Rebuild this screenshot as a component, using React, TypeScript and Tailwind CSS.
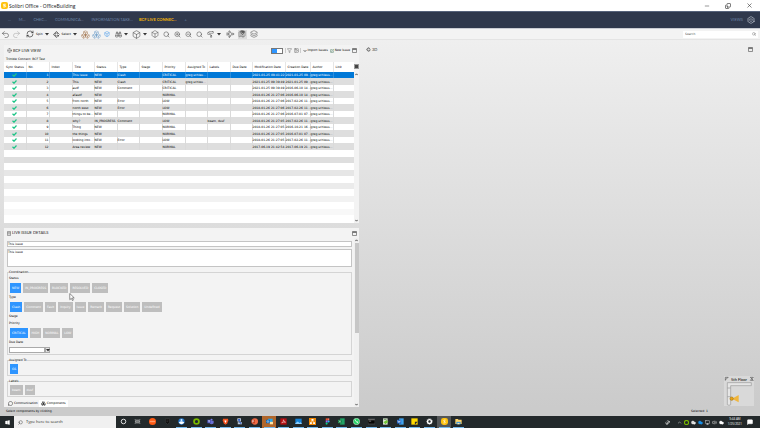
import type { ReactNode } from "react";
import {
  Binoculars,
  Box,
  Boxes,
  ChevronDown,
  ChevronUp,
  Circle,
  Cloud,
  Copy,
  Funnel,
  Glasses,
  Globe,
  Hexagon,
  Image,
  Layers,
  Map,
  MapPin,
  MessageCircle,
  MessageSquare,
  Minus,
  Monitor,
  PaintRoller,
  Plane,
  Redo2,
  RefreshCw,
  Rotate3d,
  Search,
  SquarePen,
  Undo2,
  Volume2,
  X,
  ZoomIn,
  ZoomOut,
} from "lucide-react";
import { FaWindows } from "react-icons/fa";

interface Issue {
  no: number;
  title: string;
  status: string;
  type?: string;
  priority: string;
  assigned?: string;
  labels?: string;
  modified: string;
  created: string;
}

const author = "greg.schleus...";

const issues: Issue[] = [
  { no: 1, title: "This issue", status: "NEW", type: "Clash", priority: "CRITICAL", assigned: "greg.schleu...", modified: "2021-01-25 09:41:22", created: "2021-01-25 09..." },
  { no: 2, title: "This", status: "NEW", type: "Clash", priority: "CRITICAL", assigned: "greg.schleu...", modified: "2021-01-25 09:39:49", created: "2021-01-25 09..." },
  { no: 3, title: "asdf", status: "NEW", type: "Comment", priority: "CRITICAL", modified: "2021-01-25 09:39:49", created: "2016-06-10 14..." },
  { no: 4, title: "afasdf", status: "NEW", priority: "NORMAL", modified: "2018-01-26 21:27:06", created: "2016-06-10 14..." },
  { no: 5, title: "from north", status: "NEW", type: "Error", priority: "LOW", modified: "2018-01-26 21:27:06", created: "2017-02-26 11..." },
  { no: 6, title: "north west", status: "NEW", type: "Error", priority: "LOW", modified: "2018-01-26 21:27:06", created: "2017-02-26 11..." },
  { no: 7, title: "things to be...", status: "NEW", priority: "NORMAL", modified: "2018-01-26 21:27:06", created: "2016-07-01 07..." },
  { no: 8, title: "why?", status: "IN_PROGRESS", type: "Comment", priority: "LOW", labels: "beam, dusf", modified: "2018-01-26 21:27:05", created: "2017-02-26 11..." },
  { no: 9, title: "Thing", status: "NEW", priority: "NORMAL", modified: "2018-01-26 21:27:05", created: "2016-10-21 16..." },
  { no: 10, title: "the things", status: "NEW", priority: "NORMAL", modified: "2018-01-26 21:27:05", created: "2016-07-01 07..." },
  { no: 11, title: "looking into...", status: "NEW", type: "Error", priority: "LOW", modified: "2018-01-26 21:27:05", created: "2017-02-26 11..." },
  { no: 12, title: "Area review", status: "NEW", priority: "NORMAL", modified: "2017-06-19 21:42:54", created: "2017-06-19 21..." },
];

const columns = [
  { name: "Sync Status", width: "w-[22px]" },
  { name: "No.", width: "w-[23px]" },
  { name: "Index", width: "w-[23px]" },
  { name: "Title", width: "w-[22px]" },
  { name: "Status", width: "w-[23px]" },
  { name: "Type", width: "w-[22px]" },
  { name: "Stage", width: "w-[23px]" },
  { name: "Priority", width: "w-[23px]" },
  { name: "Assigned To", width: "w-[22px]" },
  { name: "Labels", width: "w-[23px]" },
  { name: "Due Date", width: "w-[22px]" },
  { name: "Modification Date", width: "w-[33px]" },
  { name: "Creation Date", width: "w-[25px]" },
  { name: "Author", width: "w-[23px]" },
  { name: "Link", width: "w-[21px]" },
];

const fillerRows = [
  "bg-white",
  "bg-[#dedede]",
  "bg-white",
  "bg-[#e6e6e6]",
  "bg-white",
  "bg-[#ebebeb]",
  "bg-white",
  "bg-[#f2f2f2]",
  "bg-white",
  "bg-[#f8f8f8]",
];

function Caret() {
  return (
    <svg viewBox="0 0 8 6" className="h-[3px] w-[4px] shrink-0 fill-[#333]">
      <path d="M0 0h8L4 5z" />
    </svg>
  );
}

function ScrollArrow({ up }: { up?: boolean }) {
  return (
    <svg viewBox="0 0 9 9" className={`size-[3px] shrink-0 ${up ? "rotate-180" : ""}`} fill="none" stroke="#555" strokeWidth="3">
      <path d="M1 2.5l3.500 4L8 2.500" />
    </svg>
  );
}

function WindowIcon() {
  return (
    <svg viewBox="0 0 10 10" className="size-[5px] shrink-0" fill="none" stroke="#666" strokeWidth="1.4">
      <path d="M1 1h8v8H1z" />
      <path d="M1 2.5h8" strokeWidth="2.4" />
    </svg>
  );
}

function SyncCheck() {
  return (
    <svg viewBox="0 0 10 8" className="mx-auto h-[4px] w-[5px]" fill="none" stroke="#1fc487" strokeWidth="2.4">
      <path d="M1 3.5l3 3L9 1" />
    </svg>
  );
}

function Tool({ label, active, children }: { label: string; active?: boolean; children: ReactNode }) {
  return (
    <button
      type="button"
      aria-label={label}
      className={`flex h-[9px] w-[9px] shrink-0 items-center justify-center ${active ? "bg-[#dcdcdc]" : ""}`}
    >
      {children}
    </button>
  );
}

function TitleBar() {
  return (
    <header className="flex h-[11px] items-center bg-white pr-[7px] pl-[1px]">
      <svg viewBox="0 0 14 14" className="size-[7px]">
        <rect width="14" height="14" rx="4" fill="#ffc20e" />
        <path d="M9.5 4.5H6a1.3 1.3 0 0 0 0 2.6h2a1.3 1.3 0 0 1 0 2.7H4.5" fill="none" stroke="#fff" strokeWidth="1.8" />
      </svg>
      <h1 className="ml-[1px] font-['Open_Sans'] text-[5px] leading-[8px] text-[#111]">Solibri Office - OfficeBuilding</h1>
      <div className="ml-auto flex items-center gap-[15px] text-[#333]">
        <button type="button" aria-label="Minimize"><Minus size={6} strokeWidth={2} /></button>
        <button type="button" aria-label="Restore"><Copy size={6} strokeWidth={2.5} className="-scale-x-100 rotate-180" /></button>
        <button type="button" aria-label="Close"><X size={7} strokeWidth={2} /></button>
      </div>
    </header>
  );
}

function NavBar() {
  return (
    <nav className="flex h-[17px] items-center border-t border-[#56627a] bg-[#2f384c] pr-[5px] pl-[8px] font-[Lato] text-[4px] leading-[6px] text-[#6c84a6]">
      <div className="flex gap-[8px]">
        <a href="#more">...</a>
        <a href="#model">M...</a>
        <a href="#checking">CHEC...</a>
        <a href="#communication">COMMUNICA...</a>
        <a href="#takeoff">INFORMATION TAKE...</a>
        <a href="#bcf" className="-ml-[2px] font-bold text-[#f2b705]">BCF LIVE CONNEC...</a>
        <a href="#add">+</a>
      </div>
      <a href="#views" className="ml-auto">VIEWS</a>
      <div className="relative ml-[4px] text-[#c4cad4]">
        <Hexagon size={8} />
        <Box size={4} className="absolute top-[2px] left-[2px]" />
      </div>
    </nav>
  );
}

function Toolbar() {
  return (
    <div className="flex h-[12px] items-center border-y border-t-[#c9ccd2] border-b-[#e4e4e4] bg-[#f3f3f3] pr-[2px] pl-[1px] text-[#4a4a4a]">
      <Tool label="Undo"><Undo2 size={9} strokeWidth={1.5} /></Tool>
      <div className="ml-[2px] text-[#aaa]"><Tool label="Redo"><Redo2 size={9} strokeWidth={1.5} /></Tool></div>
      <button type="button" className="ml-[5px] flex items-center gap-[2px] text-[3px] text-black">
        <RefreshCw size={8} strokeWidth={1.6} />
        Spin
        <Caret />
      </button>
      <button type="button" className="ml-[4px] flex items-center gap-[2px] text-[3px] text-black">
        <Rotate3d size={7} strokeWidth={1.6} />
        Select
        <Caret />
      </button>
      <div className="ml-[4px] flex gap-[2px]">
        <Tool label="Add to selection"><Boxes size={9} strokeWidth={1.2} className="text-[#a1714a]" /></Tool>
        <Tool label="Selection basket"><Boxes size={9} strokeWidth={1.2} className="text-[#6c9cc9]" /></Tool>
        <Tool label="Set selection"><Box size={6} strokeWidth={2} className="text-[#4a9bea]" /></Tool>
        <Tool label="Show"><Binoculars size={7} strokeWidth={1.8} /></Tool>
      </div>
      <div className="ml-[1px]"><Caret /></div>
      <div className="ml-[4px]"><Tool label="View cube"><Box size={9} strokeWidth={1.5} /></Tool></div>
      <div className="ml-[2px]"><Caret /></div>
      <div className="ml-[4px] flex gap-[2px]">
        <Tool label="Section box"><Box size={8} strokeWidth={1.5} /></Tool>
        <Tool label="Zoom area"><Search size={7} strokeWidth={1.8} /></Tool>
        <Tool label="Zoom in"><ZoomIn size={7} strokeWidth={1.8} /></Tool>
        <Tool label="Zoom out"><ZoomOut size={7} strokeWidth={1.8} /></Tool>
        <Tool label="Zoom to fit"><Search size={7} strokeWidth={1.8} /></Tool>
        <Tool label="Markup"><PaintRoller size={7} strokeWidth={1.6} className="-scale-x-100" /></Tool>
      </div>
      <div className="ml-[2px]"><Caret /></div>
      <div className="ml-[5px] flex gap-[3px]">
        <Tool label="Footprint"><Plane size={8} strokeWidth={1.8} className="rotate-45" /></Tool>
        <Tool label="Map" active>
          <span className="relative">
            <Map size={8} strokeWidth={1.4} />
            <MapPin size={5} strokeWidth={2.5} className="absolute top-0 left-[2px] text-[#222]" />
          </span>
        </Tool>
        <Tool label="Layers"><Layers size={8} strokeWidth={1.8} className="text-[#666]" /></Tool>
      </div>
      <label className="ml-auto flex h-[7px] w-[75px] items-center bg-white px-[2px]">
        <input
          type="search"
          placeholder="Search"
          aria-label="Search"
          className="min-w-0 flex-1 text-[3px] leading-[6px] outline-none placeholder:text-[#555]"
        />
        <Search size={4} strokeWidth={2} />
      </label>
    </div>
  );
}

function IssueTable() {
  return (
    <div className="flex flex-1">
      <div className="min-w-0 flex-1 bg-white">
        <table className="w-full table-fixed border-collapse text-[3px] leading-[6px] whitespace-nowrap text-black">
          <thead>
            <tr className="h-[10px]">
              {columns.map((c) => (
                <th key={c.name} className={`${c.width} border-r border-[#e6e6e6] p-0 pl-[2px] text-left font-normal`}>
                  {c.name}
                </th>
              ))}
            </tr>
          </thead>
          <tbody>
            {issues.map((i, n) => {
              const cells = [
                <SyncCheck />, i.no, "", i.title, i.status, i.type, "", i.priority,
                i.assigned, i.labels, "", i.modified, i.created, author, "",
              ];
              return (
                <tr
                  key={i.no}
                  className={`h-[6px] even:h-[7px] ${n === 0 ? "bg-[#0078d7] text-white" : n % 2 ? "bg-[#dedede]" : "bg-white"}`}
                >
                  {cells.map((cell, k) => (
                    <td
                      key={k}
                      className={`border-r p-0 ${n === 0 ? "border-[#2b8ddd]" : "border-[#dadada]"} ${k === 1 ? "text-right" : ""}`}
                    >
                      {cell}
                    </td>
                  ))}
                </tr>
              );
            })}
          </tbody>
        </table>
        {fillerRows.map((bg, n) => (
          <div key={n} className={`h-[6px] even:h-[7px] ${bg}`} />
        ))}
      </div>
      <div className="flex w-[5px] flex-col items-center justify-between bg-[#f3f3f3] pb-[1px]">
        <div className="flex flex-col items-center gap-[4px] pt-[2px]">
          <div className="size-[5px] border border-[#999] bg-[#444]" />
          <ScrollArrow up />
        </div>
        <ScrollArrow />
      </div>
    </div>
  );
}

function IssueListPanel() {
  return (
    <section className="flex h-[178px] flex-col bg-[#f3f3f3]">
      <div className="flex h-[11px] items-center pr-[2px] pl-[3px]">
        <Globe size={5} strokeWidth={1.6} className="text-[#555]" />
        <h2 className="ml-[1px] font-[Lato] text-[4px] leading-[6px] text-[#222]">BCF LIVE VIEW</h2>
        <input
          type="checkbox"
          defaultChecked
          aria-label="Live connection"
          className="relative ml-auto h-[6px] w-[12px] appearance-none border border-[#777] bg-[#2e95ff] after:absolute after:top-0 after:right-0 after:h-[4px] after:w-[5px] after:bg-white"
        />
        <div className="ml-[2px] flex items-center gap-[2px] border-x border-[#ccc] px-[1px] text-[#555]">
          <Funnel size={5} strokeWidth={2} />
          <Image size={5} strokeWidth={2} />
        </div>
        <button type="button" className="ml-[2px] flex items-center gap-[1px] text-[3px] text-black">
          <ChevronDown size={4} strokeWidth={4} />
          Import Issues
        </button>
        <button type="button" className="ml-[2px] flex items-center gap-[1px] text-[3px] text-black">
          <SquarePen size={4} strokeWidth={2.5} className="text-[#3f7557]" />
          New Issue
        </button>
        <div className="ml-[2px]"><WindowIcon /></div>
      </div>
      <p className="h-[6px] pl-[2px] text-[3px] leading-[6px] text-black">Trimble Connect: BCF Test</p>
      <IssueTable />
    </section>
  );
}

function Chips({ label, items, selected }: { label?: string; items: string[]; selected?: string }) {
  return (
    <div>
      {label && <div className="mb-[2px] h-[5px] leading-[5px]">{label}</div>}
      <div className="flex gap-[2px] pl-[1px]">
        {items.map((item) => (
          <button
            key={item}
            type="button"
            aria-pressed={item === selected}
            className={`h-[10px] px-[2px] text-white ${item === selected ? "bg-[#2e95ff]" : "bg-[#bebebe]"}`}
          >
            {item}
          </button>
        ))}
      </div>
    </div>
  );
}

function Group({ title, children }: { title: string; children: ReactNode }) {
  return (
    <fieldset className="mt-[3px] border border-[#d4d4d4] px-[1px] pt-[2px] pb-[1px]">
      <legend className="h-[4px] leading-[4px]">{title}</legend>
      <div className="flex flex-col gap-[2px]">{children}</div>
    </fieldset>
  );
}

function DetailsPanel() {
  return (
    <section className="flex flex-col bg-[#f3f3f3] text-[3px] text-black">
      <div className="flex h-[10px] items-center gap-[1px] pr-[2px] pl-[3px]">
        <svg viewBox="0 0 10 12" className="h-[5px] w-[4px]" fill="none" stroke="#666" strokeWidth="1.4">
          <path d="M1 1h8v10H1zM1 4h8M1 7h8" />
        </svg>
        <h2 className="font-[Lato] text-[4px] leading-[6px] text-[#222]">LIVE ISSUE DETAILS</h2>
        <div className="ml-auto"><WindowIcon /></div>
      </div>
      <div className="flex flex-1">
        <div className="min-w-0 flex-1 pt-[3px] pr-[2px] pl-[3px]">
          <input
            aria-label="Title"
            defaultValue="This issue"
            className="block h-[6px] w-full border border-[#c4c4c4] bg-white leading-[4px]"
          />
          <textarea
            aria-label="Description"
            defaultValue="This issue"
            className="mt-[2px] block h-[18px] w-full resize-none border border-[#c4c4c4] bg-white leading-[4px]"
          />
          <Group title="Coordination">
            <Chips label="Status" items={["NEW", "IN_PROGRESS", "BLOCKED", "RESOLVED", "CLOSED"]} selected="NEW" />
            <Chips
              label="Type"
              items={["Clash", "Comment", "Fault", "Inquiry", "Issue", "Remark", "Request", "Solution", "Undefined"]}
              selected="Clash"
            />
            <div className="h-[5px] leading-[5px]">Stage</div>
            <Chips label="Priority" items={["CRITICAL", "HIGH", "NORMAL", "LOW"]} selected="CRITICAL" />
            <div>
              <label htmlFor="due" className="mb-[2px] block h-[5px] leading-[5px]">Due Date</label>
              <div className="flex h-[6px]">
                <input id="due" className="w-[36px] border border-[#aaa] bg-white" />
                <button type="button" aria-label="Pick date" className="flex w-[5px] items-center justify-center border border-[#aaa] bg-[#e4e4e4]">
                  <Caret />
                </button>
              </div>
            </div>
          </Group>
          <Group title="Assigned To">
            <Chips items={["GS"]} selected="GS" />
          </Group>
          <Group title="Labels">
            <Chips items={["beam", "dusf"]} />
          </Group>
          <div className="mt-[3px] flex h-[7px] text-[3px]">
            <button type="button" className="flex items-center gap-[1px] px-[1px]">
              <MessageCircle size={5} strokeWidth={2} />
              Communication
            </button>
            <button type="button" className="flex items-center gap-[1px] bg-white px-[2px]">
              <Boxes size={5} strokeWidth={1.4} />
              Components
            </button>
          </div>
        </div>
        <div className="flex w-[5px] flex-col items-center bg-[#f0f0f0] pt-[1px] pb-[1px]">
          <ScrollArrow up />
          <div className="mt-[1px] h-[90px] w-[4px] bg-[#c6c6c6]" />
          <div className="mt-auto"><ScrollArrow /></div>
        </div>
      </div>
    </section>
  );
}

function MiniMap() {
  return (
    <div className="absolute right-[6px] bottom-[1px] h-[30px] w-[30px] bg-[#d9d9d9] text-black">
      <div className="flex h-[7px] items-center justify-center font-[Lato] text-[4px]">5th Floor</div>
      <svg viewBox="0 0 90 90" className="absolute inset-0 size-full" fill="none" stroke="#999" strokeWidth="2">
        <path d="M10 20h72v9H20v57q-5 4-10 0z" fill="#e6e6e6" />
        <path d="M10 36h10M10 62h10" />
        <path d="M24 68l20-11v22z" fill="#f0b63e" stroke="none" />
        <circle cx="23" cy="68" r="5" fill="#e8a317" stroke="#a97812" />
        <path d="M4 14V4h9M4 12l8-8" stroke="#555" />
        <path d="M79 4l9 9M88 4l-9 9M79 4h9M79 13h9" stroke="#555" />
      </svg>
    </div>
  );
}

function Viewport() {
  return (
    <section className="relative min-w-0 flex-1">
      <div className="flex h-[9px] items-center gap-[1px] pr-[7px] pl-[7px] text-[3px] text-[#333]">
        <Rotate3d size={5} strokeWidth={2} />
        <h2 className="font-[Lato] text-[4px]">3D</h2>
        <div className="ml-auto"><WindowIcon /></div>
      </div>
      <MiniMap />
    </section>
  );
}

interface TaskIcon {
  name: string;
  open?: boolean;
  bg?: string;
  icon: ReactNode;
}

const taskIcons: TaskIcon[] = [
  { name: "Cortana", icon: <circle cx="10" cy="10" r="6.5" fill="none" stroke="#fff" strokeWidth="2.4" /> },
  { name: "Task view", icon: <path d="M3 4v2h14V4M3 16v-2h14v2M4 8.500h12v3H4z" fill="none" stroke="#ddd" strokeWidth="1.6" /> },
  { name: "Podcasts", icon: <><circle cx="10" cy="10" r="10" fill="#ff5a14" /><path d="M4 8v4M7 8v4M10 8v4M13 8v4M16 8v4" stroke="#ffd5bd" strokeWidth="1.6" /></> },
  { name: "Epic", icon: <path d="M4 2h12v11l-6 5-6-5zM7 6h6M7 10h5" fill="#111" stroke="#4a4a4a" strokeWidth="1.2" /> },
  { name: "Mail", open: true, icon: <><circle cx="10" cy="10" r="9" fill="#2275c9" /><path d="M2 13q8-8 16 0-8 9-16 0z" fill="#fff" /><circle cx="10" cy="6" r="3" fill="#d7ecff" /></> },
  { name: "Trimble", open: true, icon: <><circle cx="10" cy="10" r="7" fill="none" stroke="#78b800" strokeWidth="5" /><circle cx="10" cy="10" r="3" fill="#1c2430" /></> },
  { name: "Teams", open: true, icon: <><circle cx="13" cy="5" r="3" fill="#7b83eb" /><path d="M8 8h11v7q-5 5-11 1z" fill="#6970d4" /><path d="M1 5h10v10H1z" fill="#4b53bc" /><path d="M3 8h6M6 8v5" stroke="#fff" strokeWidth="1.6" /></> },
  { name: "Brave", open: true, icon: <><path d="M3 2h14l1 5-3 8-5 4-5-4-3-8z" fill="#f1521f" /><path d="M7 7h6l-1 4-2 3-2-3z" fill="#fff" /></> },
  { name: "Remote", open: true, icon: <><path d="M4 1h10v9H4z" fill="#dce6f4" /><path d="M6 3h6v5H6z" fill="#2458c5" /><path d="M5 12h12v6H5z" fill="#b9c7da" /><path d="M9 10l6 6" stroke="#2458c5" strokeWidth="3" /></> },
  { name: "PowerPoint", open: true, icon: <><circle cx="11" cy="10" r="9" fill="#ee6c48" /><path d="M1 5h10v10H1z" fill="#c13b1b" /><path d="M4 13V7h3q2 2 0 4H4" fill="none" stroke="#fff" strokeWidth="1.5" /></> },
  { name: "Outlook", open: true, bg: "bg-[#b0662b]", icon: <><path d="M6 2h13v12H6z" fill="#28a8ea" /><path d="M0 5h11v10H0z" fill="#0f65b5" /><circle cx="5.500" cy="10" r="2.500" fill="none" stroke="#fff" strokeWidth="1.5" /><path d="M11 11h9v7h-9z" fill="#ffe3a0" /></> },
  { name: "Acrobat", open: true, icon: <><path d="M1 1h18v18H1z" fill="#b60f12" /><path d="M5 14q5-3 5-9 1 7 6 7-6-1-11 2z" fill="none" stroke="#fff" strokeWidth="1.3" /></> },
  { name: "Photos", open: true, icon: <><path d="M1 2h18v15H1z" fill="#1683d8" /><path d="M1 15l7-5 5 4 3-2 3 3v2H1z" fill="#8ed0ff" /></> },
  { name: "Draw.io", open: true, icon: <><path d="M0 0h20v20H0z" fill="#f08705" /><path d="M7 3h6v5H7zM3 12h5v5H3zM12 12h5v5h-5z" fill="#fff" /><path d="M10 7l-4 6M10 7l4 6" stroke="#fff" strokeWidth="1.5" /></> },
  { name: "Figma", open: true, icon: <><path d="M5 1h5v6H5z" fill="#f24e1e" /><path d="M10 1h5v6h-5z" fill="#ff7262" /><path d="M5 7h5v6H5z" fill="#a259ff" /><circle cx="13" cy="10" r="3" fill="#1abcfe" /><circle cx="7.500" cy="16" r="3" fill="#0acf83" /></> },
  { name: "Excel", open: true, icon: <><path d="M6 1h13v18H6z" fill="#21a366" /><path d="M0 5h11v10H0z" fill="#107c41" /><path d="M3 7l5 6M8 7l-5 6" stroke="#fff" strokeWidth="1.5" /></> },
  { name: "WhatsApp", open: true, icon: <><circle cx="10" cy="10" r="9" fill="#25d366" stroke="#fff" strokeWidth="1.4" /><path d="M6 6q1 7 8 8l1-3-3-1-1 1-3-3 1-1-1-3z" fill="#fff" /></> },
  { name: "Terminal", open: true, icon: <><path d="M0 3h20v14H0z" fill="#050505" stroke="#888" /><path d="M1 5h18M3 9h6" stroke="#ccc" strokeWidth="1.6" /></> },
  { name: "Notepad++", open: true, icon: <><path d="M3 1h13v18H3z" fill="#dfe8d8" /><path d="M4 12l9-6 5 5-8 7z" fill="#73c53b" /><path d="M5 4h8" stroke="#4a7c3f" strokeWidth="2" /></> },
  { name: "Word", open: true, icon: <><path d="M6 1h13v18H6z" fill="#41a5ee" /><path d="M0 5h12v11H0z" fill="#185abd" /><path d="M2 7l2 6 2-5 2 5 2-6" fill="none" stroke="#fff" strokeWidth="1.4" /></> },
  { name: "Notes", open: true, icon: <><path d="M1 1h18v18H1z" fill="#ffd900" /><path d="M11 11h8l-8 8z" fill="#2d2d2d" /></> },
  { name: "Settings", open: true, icon: <><circle cx="10" cy="10" r="5.500" fill="none" stroke="#fff" strokeWidth="4" /><circle cx="10" cy="10" r="8.500" fill="none" stroke="#fff" strokeWidth="1.5" strokeDasharray="3 3" /></> },
  { name: "Solibri", open: true, bg: "bg-[#545759]", icon: <><rect width="20" height="20" rx="7" fill="#ffc20e" /><path d="M13 6H9q-3 2 0 4h2q3 2 0 4H7" fill="none" stroke="#fff" strokeWidth="2.2" /></> },
  { name: "Explorer", open: true, icon: <><path d="M1 3h7l2 2h9v12H1z" fill="#ffd56a" /><path d="M4 11h12v7H4z" fill="#3b96db" /><path d="M7 14h6v4H7z" fill="#ffe9ac" /></> },
];

function Taskbar() {
  return (
    <footer className="flex h-[12px] bg-[#23292b] font-['Open_Sans'] text-white">
      <button type="button" aria-label="Start" className="flex w-[14px] items-center justify-center">
        <FaWindows size={5} />
      </button>
      <label className="flex w-[102px] items-center gap-[3px] bg-[#f0f0f0] pl-[4px] text-[#333]">
        <Search size={5} strokeWidth={2} className="-scale-x-100" />
        <input
          aria-label="Taskbar search"
          placeholder="Type here to search"
          className="min-w-0 flex-1 text-[4px] leading-[8px] outline-none placeholder:text-[#222]"
        />
      </label>
      <div className="flex w-[350px]">
        {taskIcons.map((t) => (
          <button
            key={t.name}
            type="button"
            aria-label={t.name}
            className={`flex flex-1 flex-col items-center justify-between ${t.bg ?? ""}`}
          >
            <svg viewBox="0 0 20 20" className="mt-[2px] size-[7px]">{t.icon}</svg>
            {t.open && <span className="h-[1px] w-[11px] bg-[#76b9ed]" />}
          </button>
        ))}
      </div>
      <div className="ml-auto flex items-center gap-[2px] pr-[7px]">
        <Glasses size={5} className="mr-[5px] -rotate-45" />
        <ChevronUp size={5} />
        <Circle size={5} strokeWidth={5} className="text-[#78b800]" />
        <Cloud size={5} fill="#ddd" />
        <Cloud size={5} className="text-[#1890e8]" fill="#1890e8" />
        <Monitor size={5} />
        <Volume2 size={5} />
        <Cloud size={5} fill="#fff" />
        <div className="ml-[2px] text-center text-[3px] leading-[5px]">
          <div>9:44 AM</div>
          <div>1/25/2021</div>
        </div>
        <MessageSquare size={6} fill="#fff" className="ml-[3px]" />
      </div>
    </footer>
  );
}

export default function App() {
  return (
    <div className="relative flex min-h-screen flex-col overflow-hidden bg-[#cbcbcb] font-['DejaVu_Sans',sans-serif] leading-none">
      <TitleBar />
      <NavBar />
      <Toolbar />
      <main className="flex flex-1 bg-linear-to-b from-[#efefef] to-[#cbcbcb] pt-[5px] pl-[4px]">
        <div className="flex w-[355px] shrink-0 flex-col gap-[5px]">
          <IssueListPanel />
          <DetailsPanel />
        </div>
        <Viewport />
      </main>
      <div className="flex h-[9px] items-center justify-between bg-[#cbcbcb] pr-[52px] pl-[6px] text-[3px] text-black">
        <p>Select components by clicking.</p>
        <p>Selected: 1</p>
      </div>
      <Taskbar />
      <svg viewBox="0 0 12 18" className="absolute top-[293px] left-[69px] h-[8px] w-[6px]" fill="#fff" stroke="#333" strokeWidth="1.2">
        <path d="M1 1v14l3.500-3 2.500 5 2-1-2-5h4z" />
      </svg>
    </div>
  );
}
